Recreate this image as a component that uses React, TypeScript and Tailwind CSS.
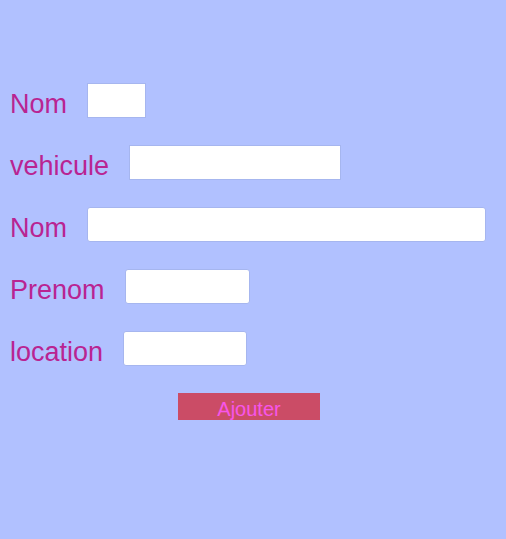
import React from "react";

type Field = { id: string; label: string; box: string };

const fields: Field[] = [
  { id: "nom-location", label: "Nom", box: "w-[59px]" },
  { id: "vehicule", label: "vehicule", box: "w-[212px]" },
  { id: "nom-client", label: "Nom", box: "w-[399px] rounded-[3px]" },
  { id: "prenom", label: "Prenom", box: "w-[125px] rounded-[3px]" },
  { id: "location", label: "location", box: "w-[124px] rounded-[3px]" },
];

export default function App() {
  return (
    <main className="min-h-screen bg-[#b1c1ff] pt-[83px] pr-[18px] pl-[10px] font-['Liberation_Sans',Arial,sans-serif]">
      <form onSubmit={(e) => e.preventDefault()}>
        <div className="flex flex-col gap-[27px]">
          {fields.map((f) => (
            <div key={f.id} className="flex h-[35px] items-center gap-5">
              <label htmlFor={f.id} className="shrink-0 pt-[7px] text-[27px] leading-[30px] text-[#b92492]">
                {f.label}
              </label>
              <input
                id={f.id}
                type="text"
                className={`h-[35px] min-w-0 border border-[#a6b6ef] bg-white px-2 text-lg outline-none ${f.box}`}
              />
            </div>
          ))}
        </div>
        <button
          type="submit"
          className="mx-auto mt-[27px] block h-[27px] w-[142px] bg-[#cb4c66] pt-[5px] text-xl leading-[22px] text-[#f855ea]"
        >
          Ajouter
        </button>
      </form>
    </main>
  );
}
